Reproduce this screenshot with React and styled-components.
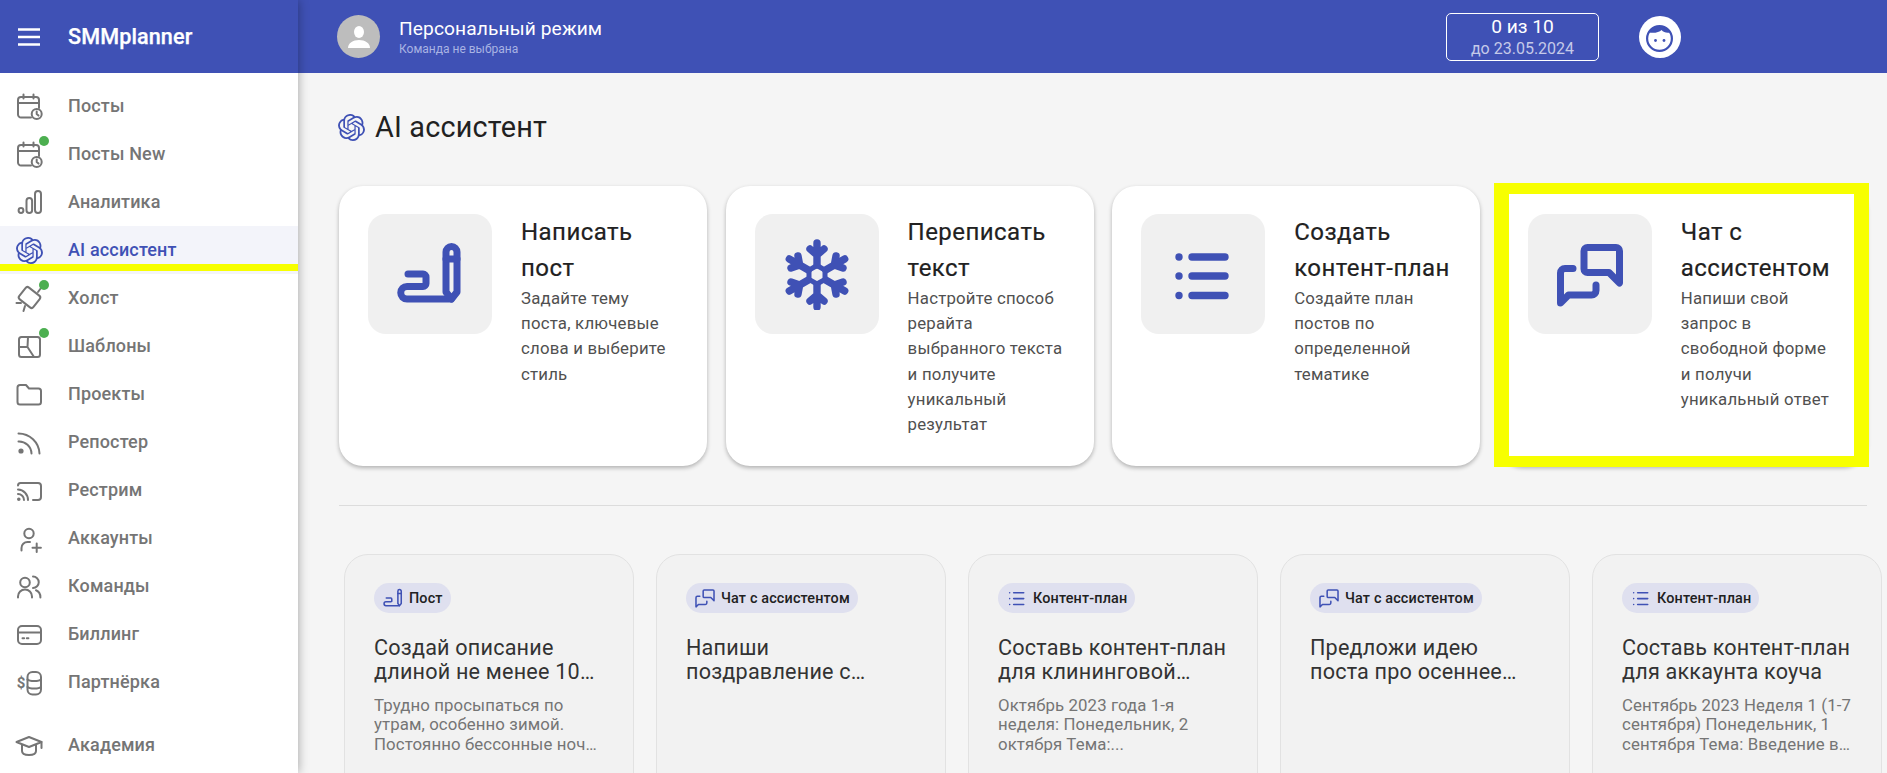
import React from "react";
import styled, { createGlobalStyle } from "styled-components";
import { SiOpenai } from "react-icons/si";

const BLUE = "#3f51b5";

const Global = createGlobalStyle`
  html, body { margin: 0; height: 100%; overflow: hidden; background: #f5f5f5; }
  #root { height: 100%; }
  * { box-sizing: border-box; }
  body { font-family: Roboto, "Liberation Sans", sans-serif; }
`;

const Page = styled.div`
  display: flex;
  height: 773px;
  overflow: hidden;
`;

const Sidebar = styled.aside`
  flex: 0 0 298px;
  display: flex;
  flex-direction: column;
  background: #fff;
  box-shadow: 0 0 10px rgba(0, 0, 0, 0.35);
  position: relative;
  z-index: 2;
`;

const Brand = styled.div`
  height: 73px;
  flex: none;
  display: flex;
  align-items: center;
  padding-left: 18px;
  gap: 28px;
  background: ${BLUE};
  color: #fff;
`;

const Burger = styled.svg`
  width: 22px;
  height: 18px;
  stroke: #fff;
  stroke-width: 2.4;
`;

const BrandName = styled.span`
  font-size: 21.6px;
  font-weight: 500;
  letter-spacing: 0.1px;
  -webkit-text-stroke: 0.25px #fff;
`;

const Nav = styled.nav`
  display: flex;
  flex-direction: column;
  padding-top: 9px;
`;

const NavRow = styled.div`
  position: relative;
  height: 48px;
  flex: none;
  display: flex;
  align-items: center;
  gap: 24px;
  padding-left: 14px;
  margin-top: ${(p) => (p.$gapTop ? "15px" : "0")};
  font-size: 18px;
  font-weight: 500;
  letter-spacing: 0.15px;
  color: ${(p) => (p.$active ? BLUE : "#757575")};
  background: ${(p) => (p.$active ? "#f3f4fa" : "transparent")};
`;

const NavLabel = styled.span`
  margin-top: -1px;
`;

const Mark = styled.div`
  position: absolute;
  left: 0;
  right: 0;
  bottom: 3px;
  height: 7px;
  background: #f7ff00;
`;

const NavIconBox = styled.span`
  position: relative;
  width: 30px;
  height: 30px;
  flex: none;
  display: flex;
  align-items: center;
  justify-content: center;
`;

const Dot = styled.span`
  position: absolute;
  left: 25px;
  top: -3px;
  width: 10px;
  height: 10px;
  border-radius: 50%;
  background: #4caf50;
`;

const LineIcon = styled.svg`
  width: 30px;
  height: 30px;
  fill: none;
  stroke: #757575;
  stroke-width: 2;
  stroke-linecap: round;
  stroke-linejoin: round;
`;

const Content = styled.div`
  flex: 1;
  min-width: 0;
  display: flex;
  flex-direction: column;
`;

const Topbar = styled.header`
  height: 73px;
  flex: none;
  display: flex;
  align-items: center;
  padding: 0 206px 0 39px;
  background: ${BLUE};
  color: #fff;
`;

const Avatar = styled.div`
  width: 43px;
  height: 43px;
  border-radius: 50%;
  background: #bdbdbd;
  display: flex;
  align-items: center;
  justify-content: center;
  flex: none;
`;

const Mode = styled.div`
  margin-left: 19px;
  display: flex;
  flex-direction: column;
  margin-right: auto;
  margin-top: 1px;
`;

const ModeName = styled.div`
  font-size: 19.2px;
  line-height: 24px;
  letter-spacing: 0.1px;
`;

const ModeSub = styled.div`
  font-size: 12px;
  line-height: 15px;
  margin-top: 1px;
  color: #a9b3e3;
`;

const Quota = styled.div`
  width: 153px;
  height: 48px;
  border: 1px solid #fff;
  border-radius: 5px;
  display: flex;
  flex-direction: column;
  align-items: center;
  justify-content: center;
`;

const QuotaCount = styled.div`
  font-size: 19.2px;
  line-height: 23px;
`;

const QuotaDate = styled.div`
  font-size: 16px;
  line-height: 21px;
  color: #c5cae9;
`;

const Face = styled.svg`
  width: 42px;
  height: 42px;
  margin-left: 40px;
  flex: none;
`;

const Main = styled.main`
  flex: 1;
  min-height: 0;
  padding: 36px 0 0 41px;
  background: #f5f5f5;
  overflow: hidden;
`;

const Heading = styled.h1`
  margin: 0 0 41px -1px;
  height: 36px;
  display: flex;
  align-items: center;
  gap: 10px;
  font-size: 28.8px;
  font-weight: 400;
  letter-spacing: 0.2px;
  color: #212121;
`;

const TileGrid = styled.div`
  display: flex;
  gap: 18.6px;
`;

const Tile = styled.div`
  position: relative;
  width: 368px;
  height: 280px;
  flex: none;
  display: flex;
  gap: 29px;
  padding: 28px 29px;
  background: #fff;
  border-radius: 24px;
  box-shadow: 0 2px 4px rgba(0, 0, 0, 0.28);
`;

const Highlight = styled.div`
  position: absolute;
  top: -3px;
  left: -4.8px;
  right: -2.2px;
  bottom: -1px;
  border-style: solid;
  border-color: #f7ff00;
  border-width: 11px 15px;
`;

const TileIconBox = styled.div`
  width: 124px;
  height: 120px;
  flex: none;
  border-radius: 18px;
  background: #f0f0f0;
  display: flex;
  align-items: center;
  justify-content: center;
`;

const TileBody = styled.div`
  flex: 1;
  min-width: 0;
`;

const TileTitle = styled.div`
  font-size: 24px;
  line-height: 36px;
  font-weight: 400;
  letter-spacing: 0.45px;
  color: #212121;
  -webkit-text-stroke: 0.2px #212121;
`;

const TileText = styled.div`
  font-size: 16.8px;
  line-height: 25.2px;
  letter-spacing: 0.22px;
  color: #505050;
`;

const GlyphSvg = styled.svg`
  width: ${(p) => p.$size}px;
  height: ${(p) => p.$size}px;
  flex: none;
  fill: none;
  stroke: ${BLUE};
  stroke-width: ${(p) => p.$weight};
  stroke-linecap: round;
  stroke-linejoin: round;
`;

const Divider = styled.hr`
  margin: 39px 20px 0 0;
  border: 0;
  border-top: 1px solid #dcdcdc;
`;

const Examples = styled.div`
  display: flex;
  gap: 22px;
  margin: 48px 0 0 5px;
`;

const Example = styled.div`
  width: 290px;
  height: 300px;
  flex: none;
  padding: 28px 27px 28px 29px;
  background: #f2f2f2;
  border: 1px solid #e2e2e2;
  border-radius: 24px;
`;

const Chip = styled.div`
  display: inline-flex;
  align-items: center;
  gap: 5px;
  height: 30px;
  padding: 0 8px;
  border-radius: 15px;
  background: #dfe0ef;
  font-size: 14.4px;
  font-weight: 500;
  letter-spacing: 0.15px;
  color: #212121;
`;

const ExampleTitle = styled.div`
  margin-top: 23px;
  font-size: 21.6px;
  line-height: 24.4px;
  letter-spacing: 0.2px;
  color: #333;
  display: -webkit-box;
  -webkit-box-orient: vertical;
  -webkit-line-clamp: 2;
  overflow: hidden;
`;

const ExampleText = styled.div`
  margin-top: 11px;
  font-size: 16.8px;
  line-height: 19.6px;
  letter-spacing: 0.1px;
  color: #757575;
  display: -webkit-box;
  -webkit-box-orient: vertical;
  -webkit-line-clamp: 3;
  overflow: hidden;
`;

const Line = ({ children }) => <LineIcon viewBox="0 0 30 30">{children}</LineIcon>;

const CalendarIcon = () => (
  <Line>
    <path d="M17 26.5H7a3 3 0 0 1-3-3V9a3 3 0 0 1 3-3h15a3 3 0 0 1 3 3v8" />
    <path d="M9.5 3.5v4M19.5 3.5v4M4 12h21" />
    <circle cx="22.7" cy="23" r="5" />
    <path d="M22.7 20.5V23l1.8 1.6" />
  </Line>
);
const BarsIcon = () => (
  <Line>
    <circle cx="7" cy="23.5" r="2.4" />
    <rect x="12.5" y="11" width="5.6" height="15" rx="2.8" />
    <rect x="21" y="4" width="6" height="22" rx="3" />
  </Line>
);
const CanvasIcon = () => (
  <Line>
    <rect x="8" y="5.5" width="15" height="18" rx="2.5" transform="rotate(-52 15.5 14.5)" />
    <path d="M24 9l3-4M7 20H2.500M11 23l-1.500 5" />
  </Line>
);
const TemplateIcon = () => (
  <Line>
    <rect x="5" y="6" width="21" height="20" rx="2.5" />
    <path d="M14 6l-.5 10H5M13.5 16l6.500 10" />
  </Line>
);
const FolderIcon = () => (
  <Line>
    <path d="M3.500 8.500a2.500 2.500 0 0 1 2.500-2.500h6l3 3.500h9.500a2.500 2.500 0 0 1 2.500 2.500v11a2.500 2.500 0 0 1-2.500 2.500H6A2.500 2.500 0 0 1 3.500 23z" />
  </Line>
);
const RssIcon = () => (
  <Line>
    <circle cx="7" cy="24" r="1.6" fill="#757575" />
    <path d="M4.500 6.500A21 21 0 0 1 25.500 26.500M4.500 14.500A12.500 12.500 0 0 1 17.500 26.500" />
  </Line>
);
const CastIcon = () => (
  <Line>
    <path d="M4 10.500A2.500 2.500 0 0 1 6.500 8H24a3 3 0 0 1 3 3v11a3 3 0 0 1-3 3h-5" />
    <path d="M4 14.500A10.500 10.500 0 0 1 14 25M4 19a6 6 0 0 1 6 6" />
    <circle cx="4.800" cy="24.200" r=".8" fill="#757575" />
  </Line>
);
const UserPlusIcon = () => (
  <Line>
    <circle cx="15" cy="10.500" r="4.700" />
    <path d="M7.500 27.500v-2.500a6 6 0 0 1 6-6h2.500" />
    <path d="M22.700 20.500v8.400M18.500 24.700h8.400" />
  </Line>
);
const UsersIcon = () => (
  <Line>
    <circle cx="11" cy="11.500" r="4.800" />
    <path d="M4 26.500v-1a7 7 0 0 1 14 0v1" />
    <path d="M19 5.500a5.600 5.600 0 0 1 0 11.500M22 19.300c2.700 1 4.400 3.500 4.400 7.200" />
  </Line>
);
const CardIcon = () => (
  <Line>
    <rect x="4" y="7" width="23" height="18" rx="4" />
    <path d="M4 13.500h23M8.500 19.300h1.600M12.800 19.300h1.600" />
  </Line>
);
const CoinsIcon = () => (
  <Line>
    <text x="2.800" y="21" fontSize="15" fontWeight="700" fill="#757575" stroke="none" fontFamily="Roboto, sans-serif">$</text>
    <rect x="13.500" y="5" width="13.500" height="22.500" rx="5" />
    <path d="M13.500 12.500c2 2 11.500 2 13.500 0M13.500 20c2 2 11.500 2 13.500 0" />
  </Line>
);
const CapIcon = () => (
  <Line>
    <path d="M2.500 12L15 7l12.500 5L15 17z" />
    <path d="M8 15v6c0 2.600 3 4 7 4s7-1.400 7-4v-6M27.500 12v6" />
  </Line>
);

const OpenAiNav = () => <SiOpenai size={27} color={BLUE} />;

const navItems = [
  { label: "Посты", Icon: CalendarIcon },
  { label: "Посты New", Icon: CalendarIcon, dot: true },
  { label: "Аналитика", Icon: BarsIcon },
  { label: "AI ассистент", Icon: OpenAiNav, active: true },
  { label: "Холст", Icon: CanvasIcon, dot: true },
  { label: "Шаблоны", Icon: TemplateIcon, dot: true },
  { label: "Проекты", Icon: FolderIcon },
  { label: "Репостер", Icon: RssIcon },
  { label: "Рестрим", Icon: CastIcon },
  { label: "Аккаунты", Icon: UserPlusIcon },
  { label: "Команды", Icon: UsersIcon },
  { label: "Биллинг", Icon: CardIcon },
  { label: "Партнёрка", Icon: CoinsIcon },
  { label: "Академия", Icon: CapIcon, gapTop: true },
];

const PostGlyph = ({ size = 72 }) => (
  <GlyphSvg $size={size} $weight={size === 72 ? 7 : 5} viewBox="0 0 72 72">
    <path d="M14 36H29a3 3 0 0 1 3 3v6.500a3 3 0 0 1-3 3H13a6.200 6.200 0 0 0 0 12.500H57" />
    <path d="M52 54V14a5.500 5.500 0 0 1 11 0V54l-5.500 7-5.500-7z" />
    <path d="M52 21h11" />
  </GlyphSvg>
);

const SnowGlyph = ({ size = 72 }) => (
  <GlyphSvg $size={size} $weight={7.4} viewBox="0 0 72 72">
    <path d="M36 27.500l8 4.600v9.300L36 46l-8-4.600v-9.300z" strokeWidth="5" />
    {[0, 60, 120, 180, 240, 300].map((a) => (
      <g key={a} transform={`rotate(${a} 36 37)`}>
        <path d="M36 27V5M29 11l7 6 7-6" />
      </g>
    ))}
  </GlyphSvg>
);

const ListGlyph = ({ size = 72 }) => (
  <GlyphSvg $size={size} $weight={size === 72 ? 7.4 : 5} viewBox="0 0 72 72">
    <path d="M12 19h.01M12 38h.01M12 57.500h.01" />
    <path d="M25 19h33M25 38h33M25 57.500h33" />
  </GlyphSvg>
);

const ChatGlyph = ({ size = 72 }) => (
  <GlyphSvg $size={size} $weight={size === 72 ? 7 : 5} viewBox="0 0 72 72">
    <path d="M65.500 45V13A3.500 3.500 0 0 0 62 9.500H33.500A3.500 3.500 0 0 0 30 13v18a3.500 3.500 0 0 0 3.500 3.500H55z" />
    <path d="M19 30.500H11a4.500 4.500 0 0 0-4.500 4.500v30l8-8H37.500a4.500 4.500 0 0 0 4.500-4.500V47" />
  </GlyphSvg>
);

const tiles = [
  { title: "Написать пост", text: "Задайте тему поста, ключевые слова и выберите стиль", Glyph: PostGlyph },
  { title: "Переписать текст", text: "Настройте способ рерайта выбранного текста и получите уникальный результат", Glyph: SnowGlyph },
  { title: "Создать контент-план", text: "Создайте план постов по определенной тематике", Glyph: ListGlyph },
  { title: "Чат с ассистентом", text: "Напиши свой запрос в свободной форме и получи уникальный ответ", Glyph: ChatGlyph, marked: true },
];

const examples = [
  { chip: "Пост", Glyph: PostGlyph, title: "Создай описание длиной не менее 100 слов для поста", text: "Трудно просыпаться по утрам, особенно зимой. Постоянно бессонные ночи и усталость мешают" },
  { chip: "Чат с ассистентом", Glyph: ChatGlyph, title: "Напиши поздравление с…", text: "" },
  { chip: "Контент-план", Glyph: ListGlyph, title: "Составь контент-план для клининговой компании на месяц", text: "Октябрь 2023 года 1-я неделя: Понедельник, 2 октября Тема:..." },
  { chip: "Чат с ассистентом", Glyph: ChatGlyph, title: "Предложи идею поста про осеннее настроение", text: "" },
  { chip: "Контент-план", Glyph: ListGlyph, title: "Составь контент-план для аккаунта коуча", text: "Сентябрь 2023 Неделя 1 (1-7 сентября) Понедельник, 1 сентября Тема: Введение в коучинг и его" },
];

export default function App() {
  return (
    <Page>
      <Global />
      <Sidebar>
        <Brand>
          <Burger viewBox="0 0 22 18">
            <path d="M0 1.500h22M0 9h22M0 16.500h22" />
          </Burger>
          <BrandName>SMMplanner</BrandName>
        </Brand>
        <Nav>
          {navItems.map(({ label, Icon, dot, active, gapTop }) => (
            <NavRow key={label} $active={active} $gapTop={gapTop}>
              <NavIconBox>
                <Icon />
                {dot && <Dot />}
              </NavIconBox>
              <NavLabel>{label}</NavLabel>
              {active && <Mark />}
            </NavRow>
          ))}
        </Nav>
      </Sidebar>
      <Content>
        <Topbar>
          <Avatar>
            <svg width="24" height="26" viewBox="0 0 24 26" fill="#fff">
              <ellipse cx="12" cy="8" rx="5" ry="6" />
              <path d="M1 24c0-5 5-8 11-8s11 3 11 8z" />
            </svg>
          </Avatar>
          <Mode>
            <ModeName>Персональный режим</ModeName>
            <ModeSub>Команда не выбрана</ModeSub>
          </Mode>
          <Quota>
            <QuotaCount>0 из 10</QuotaCount>
            <QuotaDate>до 23.05.2024</QuotaDate>
          </Quota>
          <Face viewBox="0 0 42 42">
            <circle cx="21" cy="21" r="21" fill="#fff" />
            <circle cx="20.500" cy="22.500" r="12.400" fill="none" stroke={BLUE} strokeWidth="2.200" />
            <path d="M10 16.500c2-4 6-6.500 10.500-6.500s8.500 2.500 10.500 6.500c-3.500.8-6.500-.3-8.500-2.500-2 2.300-7.500 3.500-12.500 2.500z" fill={BLUE} />
            <circle cx="16.500" cy="24.500" r="1.400" fill={BLUE} />
            <circle cx="25" cy="24.500" r="1.400" fill={BLUE} />
          </Face>
        </Topbar>
        <Main>
          <Heading>
            <SiOpenai size={27} color={BLUE} />
            AI ассистент
          </Heading>
          <TileGrid>
            {tiles.map(({ title, text, Glyph, marked }) => (
              <Tile key={title}>
                <TileIconBox>
                  <Glyph />
                </TileIconBox>
                <TileBody>
                  <TileTitle>{title}</TileTitle>
                  <TileText>{text}</TileText>
                </TileBody>
                {marked && <Highlight />}
              </Tile>
            ))}
          </TileGrid>
          <Divider />
          <Examples>
            {examples.map(({ chip, Glyph, title, text }, i) => (
              <Example key={i}>
                <Chip>
                  <Glyph size={22} />
                  {chip}
                </Chip>
                <ExampleTitle>{title}</ExampleTitle>
                {text && <ExampleText>{text}</ExampleText>}
              </Example>
            ))}
          </Examples>
        </Main>
      </Content>
    </Page>
  );
}
